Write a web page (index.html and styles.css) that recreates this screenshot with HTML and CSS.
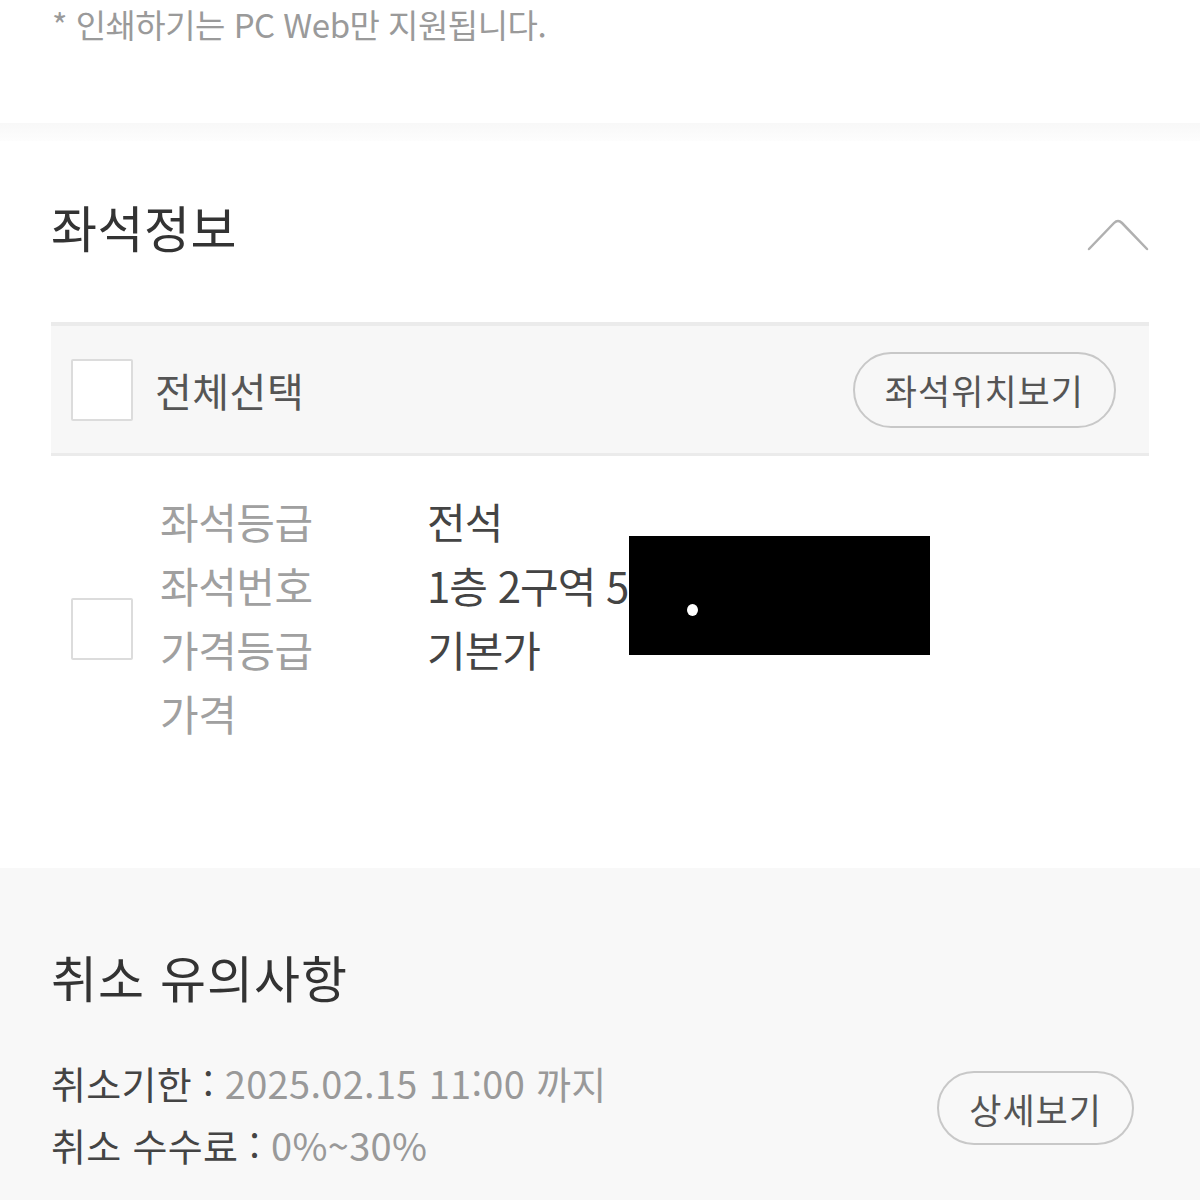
FILE: index.html
```html
<!DOCTYPE html>
<html lang="ko">
<head>
  <meta charset="UTF-8">
  <meta name="viewport" content="width=device-width, initial-scale=1.0">
  <title>예매 상세</title>
  <link rel="stylesheet" href="styles.css">
</head>
<body>

  <div class="notice">* 인쇄하기는 PC Web만 지원됩니다.</div>
  <div class="divider"></div>

  <div class="section seat">
    <div class="section-head">
      <h2>좌석정보</h2>
      <svg class="chevron" width="62" height="34" viewBox="0 0 62 34">
        <path d="M2 32 L27 6 Q31 2 35 6 L60 32" fill="none" stroke="#b0b0b0" stroke-width="2.5" stroke-linecap="round"/>
      </svg>
    </div>

    <div class="seat-table">
      <div class="select-all">
        <span class="check"></span>
        <span class="select-label">전체선택</span>
        <button class="pill">좌석위치보기</button>
      </div>

      <div class="seat-item">
        <span class="check"></span>
        <div class="seat-info">
          <div class="info-row"><span class="info-key">좌석등급</span><span class="info-val">전석</span></div>
          <div class="info-row"><span class="info-key">좌석번호</span><span class="info-val">1층 2구역 5</span></div>
          <div class="info-row"><span class="info-key">가격등급</span><span class="info-val">기본가</span></div>
          <div class="info-row"><span class="info-key">가격</span><span class="info-val"></span></div>
        </div>
        <div class="redact"><span class="dot"></span></div>
      </div>
    </div>
  </div>

  <div class="section cancel">
    <h2>취소 유의사항</h2>
    <div class="cancel-body">
      <div class="cancel-lines">
        <p>취소기한 : <span class="muted">2025.02.15 11:00 까지</span></p>
        <p>취소 수수료 : <span class="muted">0%~30%</span></p>
      </div>
      <button class="pill pill-sm">상세보기</button>
    </div>
  </div>

</body>
</html>
```

FILE: styles.css
```css
body { margin: 0; background: #fff; font-family: "Noto Sans CJK KR", "Noto Sans", sans-serif; color: #333; width: 1200px; }

.notice { padding: 0 52px; height: 123px; font-size: 33px; line-height: 48px; color: #9a9a9a; letter-spacing: -0.5px; }
.divider { height: 18px; background: linear-gradient(#f8f8f8, #fdfdfd); }

.section { padding: 0 51px; }
.section h2 { margin: 0; font-size: 50px; font-weight: 400; letter-spacing: 0.5px; color: #333; }

.seat .section-head { display: flex; justify-content: space-between; align-items: center; height: 181px; }
.seat .section-head h2 { margin-bottom: 12px; }
.chevron { margin-top: 4px; }

.seat-table { border-top: 4px solid #ebebeb; }
.select-all { display: flex; align-items: center; height: 127px; padding: 0 33px 0 20px; background: #f7f7f7; border-bottom: 3px solid #ebebeb; }
.check { display: inline-block; width: 58px; height: 58px; border: 2px solid #dcdcdc; background: #fff; border-radius: 2px; flex: none; }
.select-label { margin-left: 22px; font-size: 40px; letter-spacing: 0.5px; color: #555; flex: 1; }

.pill { font-family: inherit; font-size: 35px; letter-spacing: 1px; color: #555; background: transparent; border: 2px solid #c8c8c8; border-radius: 40px; height: 76px; padding: 0 30px; cursor: pointer; }
.pill-sm { height: 74px; padding: 0 30px; margin-top: -12px; }

.seat-item { position: relative; display: flex; align-items: center; padding: 33px 20px 123px; }
.seat-item .check { margin-top: 24px; }
.seat-info { margin-left: 27px; }
.info-row { display: flex; height: 64px; line-height: 64px; font-size: 42px; letter-spacing: -0.5px; }
.info-key { width: 267px; color: #a0a0a0; }
.info-val { color: #444; letter-spacing: -1px; }

.redact { position: absolute; left: 578px; top: 80px; width: 301px; height: 119px; background: #000; }
.redact .dot { position: absolute; left: 58px; top: 68px; width: 11px; height: 12px; border-radius: 50%; background: #fff; }

.cancel { background: #f8f8f8; padding-top: 72px; padding-bottom: 40px; }
.cancel h2 { letter-spacing: 1px; }
.cancel-body { display: flex; align-items: center; justify-content: space-between; margin-top: 40px; padding-right: 15px; }
.cancel-lines p { margin: 0; font-size: 38px; line-height: 62px; letter-spacing: 0.3px; color: #444; }
.muted { color: #999; }
```
